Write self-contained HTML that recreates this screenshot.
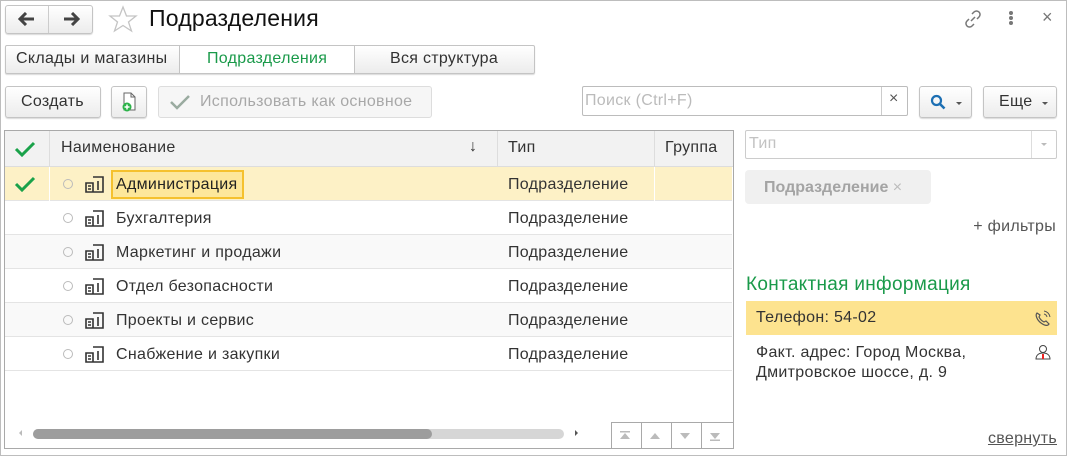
<!DOCTYPE html>
<html><head><meta charset="utf-8"><style>
*{box-sizing:border-box;margin:0;padding:0}
body{width:1067px;height:457px;overflow:hidden;background:#fff;font-family:"Liberation Sans",Arial,sans-serif;font-size:16px;letter-spacing:.3px;color:#333;position:relative}
.a{position:absolute}
.frame{left:0;top:0;width:1067px;height:456px;border:1px solid #bdbdbd}
.btn{position:absolute;border:1px solid #c4c4c4;border-radius:3px;background:linear-gradient(#fff,#ececec);box-shadow:0 1px 1px rgba(0,0,0,.15)}
.row{position:absolute;left:5px;width:727px;height:34px;border-bottom:1px solid #e4e4e4}
.dot{position:absolute;left:58px;top:12px;width:10px;height:10px;border:1px solid #bbb;border-radius:50%}
.ico{position:absolute;left:80px;top:8px}
.t{position:absolute;top:9px}
</style></head><body>
<div class="a frame"></div>
<div class="btn" style="left:5px;top:5px;width:88px;height:29px"></div>
<div class="a" style="left:48px;top:6px;width:1px;height:27px;background:#ccc"></div>
<svg class="a" style="left:18px;top:12px" width="18" height="14"><path d="M2 7H16M8 1L2 7L8 13" stroke="#444" stroke-width="3" fill="none"/></svg>
<svg class="a" style="left:62px;top:12px" width="18" height="14"><path d="M2 7H16M10 1L16 7L10 13" stroke="#444" stroke-width="3" fill="none"/></svg>
<svg class="a" style="left:108px;top:5px" width="30" height="28"><path d="M15 2L18.5 11H28L20.5 17L23.5 26L15 20.5L6.5 26L9.5 17L2 11H11.5Z" fill="none" stroke="#c4c4c4" stroke-width="1.3"/></svg>
<div class="a" style="left:149px;top:5px;font-size:23px;color:#111;letter-spacing:.2px">Подразделения</div>
<svg class="a" style="left:963px;top:9px" width="20" height="20"><path d="M8 12L12 8M9 5l2-2a3.5 3.5 0 015 5l-2 2M11 15l-2 2a3.5 3.5 0 01-5-5l2-2" stroke="#777" stroke-width="1.5" fill="none"/></svg>
<div class="a" style="left:1009px;top:11px;width:4px;height:4px;background:#777;border-radius:2px;box-shadow:0 5px 0 #777,0 10px 0 #777"></div>
<div class="a" style="left:1042px;top:7px;font-size:18px;color:#777">×</div>
<div class="btn" style="left:5px;top:45px;width:530px;height:29px;border-radius:2px"></div>
<div class="a" style="left:179px;top:45px;width:176px;height:29px;background:#fff;border:1px solid #c4c4c4"></div>
<div class="a" style="left:16px;top:50px;color:#333">Склады и магазины</div>
<div class="a" style="left:207px;top:50px;color:#1a9a4a">Подразделения</div>
<div class="a" style="left:390px;top:50px;color:#333">Вся структура</div>
<div class="btn" style="left:5px;top:86px;width:96px;height:32px"></div>
<div class="a" style="left:21px;top:93px;color:#333">Создать</div>
<div class="btn" style="left:111px;top:86px;width:36px;height:32px"></div>
<svg class="a" style="left:119px;top:91px" width="20" height="22"><path d="M5 2H12L16 6V19H5Z" fill="#fff" stroke="#666"/><path d="M12 2V6H16" fill="none" stroke="#666"/><circle cx="8" cy="16" r="4.5" fill="#2db34a"/><path d="M8 13.5v5M5.5 16h5" stroke="#fff" stroke-width="1.5"/></svg>
<div class="a" style="left:158px;top:86px;width:274px;height:32px;border:1px solid #ddd;border-radius:3px;background:#f6f6f6"></div>
<svg class="a" style="left:169px;top:94px" width="22" height="16"><path d="M2 8L8 14L20 2" stroke="#9aaba0" stroke-width="2.5" fill="none"/></svg>
<div class="a" style="left:200px;top:93px;color:#a8a8a8">Использовать как основное</div>
<div class="a" style="left:582px;top:86px;width:326px;height:30px;border:1px solid #bcbcbc;border-radius:2px"></div>
<div class="a" style="left:881px;top:87px;width:1px;height:28px;background:#ccc"></div>
<div class="a" style="left:585px;top:92px;color:#bbb">Поиск (Ctrl+F)</div>
<div class="a" style="left:889px;top:90px;color:#555;font-size:16px">×</div>
<div class="btn" style="left:919px;top:86px;width:53px;height:32px"></div>
<svg class="a" style="left:930px;top:94px" width="16" height="16"><circle cx="6.5" cy="6.5" r="4.5" stroke="#1c6fb3" stroke-width="2.2" fill="none"/><path d="M10 10L14.5 14.5" stroke="#1c6fb3" stroke-width="2.6"/></svg>
<div class="a" style="left:956px;top:102px;border:3px solid transparent;border-top:3px solid #555"></div>
<div class="btn" style="left:983px;top:86px;width:74px;height:32px"></div>
<div class="a" style="left:999px;top:93px;color:#333">Еще</div>
<div class="a" style="left:1042px;top:102px;border:3px solid transparent;border-top:3px solid #555"></div>
<div class="a" style="left:4px;top:130px;width:730px;height:319px;border:1px solid #a9a9a9"></div>
<div class="a" style="left:5px;top:131px;width:728px;height:36px;background:#f2f2f2;border-bottom:1px solid #ddd"></div>
<div class="a" style="left:49px;top:131px;width:1px;height:36px;background:#ddd"></div>
<div class="a" style="left:497px;top:131px;width:1px;height:36px;background:#ddd"></div>
<div class="a" style="left:654px;top:131px;width:1px;height:36px;background:#ddd"></div>
<svg class="a" style="left:14px;top:141px" width="22" height="16"><path d="M2 8L8 14L20 2" stroke="#1aa24a" stroke-width="3" fill="none"/></svg>
<div class="a" style="left:61px;top:139px;color:#333">Наименование</div>
<div class="a" style="left:469px;top:138px;color:#333">↓</div>
<div class="a" style="left:508px;top:139px;color:#333">Тип</div>
<div class="a" style="left:665px;top:139px;color:#333">Группа</div>
<div class="row" style="top:167px;background:#fdf1c6"><svg class="a" style="left:9px;top:9px" width="22" height="16"><path d="M2 8L8 14L20 2" stroke="#1aa24a" stroke-width="3" fill="none"/></svg><div class="a" style="left:44px;top:0;width:1px;height:34px;background:#fff"></div><div class="a" style="left:649px;top:0;width:1px;height:34px;background:#fff"></div><div class="a" style="left:106px;top:3px;width:133px;height:29px;border:2px solid #f5c12e;background:#fde79b"></div></div>
<div class="row" style="top:201px"></div>
<div class="row" style="top:235px;background:#f9f9f9"></div>
<div class="row" style="top:269px"></div>
<div class="row" style="top:303px;background:#f9f9f9"></div>
<div class="row" style="top:337px"></div>
<div class="a" style="left:16px;top:430px;border:3px solid transparent;border-right:3px solid #bbb"></div>
<div class="a" style="left:33px;top:429px;width:531px;height:10px;background:#d6d6d6;border-radius:5px"></div>
<div class="a" style="left:33px;top:429px;width:399px;height:10px;background:#9d9d9d;border-radius:5px"></div>
<div class="a" style="left:575px;top:430px;border:3px solid transparent;border-left:3px solid #555"></div>
<div class="a" style="left:611px;top:422px;width:122px;height:26px;border-top:1px solid #a9a9a9;border-left:1px solid #a9a9a9"></div>
<div class="a" style="left:641px;top:423px;width:1px;height:25px;background:#a9a9a9"></div>
<div class="a" style="left:671px;top:423px;width:1px;height:25px;background:#a9a9a9"></div>
<div class="a" style="left:701px;top:423px;width:1px;height:25px;background:#a9a9a9"></div>
<svg class="a" style="left:619px;top:430px" width="110" height="12" fill="#bbb"><path d="M1 1h10v1.5H1zM6 3L11 9H1z"/><path d="M36 3L41 9H31z"/><path d="M61 3H71L66 9z"/><path d="M91 3H101L96 9zM91 9.5h10V11H91z"/></svg>
<div class="a" style="left:745px;top:130px;width:312px;height:29px;border:1px solid #ccc;border-radius:2px"></div>
<div class="a" style="left:1031px;top:131px;width:1px;height:27px;background:#ddd"></div>
<div class="a" style="left:749px;top:135px;color:#c2c2c2">Тип</div>
<div class="a" style="left:1041px;top:143px;border:3px solid transparent;border-top:3px solid #bbb"></div>
<div class="a" style="left:745px;top:170px;width:186px;height:34px;background:#f0f0f0;border-radius:4px"></div>
<div class="a" style="left:764px;top:179px;color:#a4a4a4;font-weight:bold;letter-spacing:0">Подразделение <span style="font-weight:normal;color:#bbb">×</span></div>
<div class="a" style="right:11px;top:218px;color:#555">+ фильтры</div>
<div class="a" style="left:746px;top:274px;font-size:19px;color:#1a9a4a">Контактная информация</div>
<div class="a" style="left:746px;top:301px;width:311px;height:34px;background:#fde38f"></div>
<div class="a" style="left:756px;top:309px;color:#333">Телефон: 54-02</div>
<svg class="a" style="left:1034px;top:310px" width="17" height="17"><path d="M3 3c-2 2 0 7 4 10s7 3 8 1l-3-3-2 1c-2-1-4-3-5-5l1-2z" fill="none" stroke="#555" stroke-width="1.2"/><path d="M10 4a4 4 0 013 3M10 1a7 7 0 016 6" stroke="#555" fill="none"/></svg>
<div class="a" style="left:756px;top:343px;color:#333;line-height:20px">Факт. адрес: Город Москва,<br>Дмитровское шоссе, д. 9</div>
<svg class="a" style="left:1035px;top:344px" width="16" height="16"><circle cx="8" cy="5" r="3.5" fill="none" stroke="#444"/><path d="M1 15c0-4 3-6 7-6s7 2 7 6z" fill="none" stroke="#444"/><path d="M8 10v5" stroke="#e22" stroke-width="2"/></svg>
<div class="a" style="right:10px;top:430px;color:#555;text-decoration:underline">свернуть</div>
<div class="a" style="left:5px;top:167px;width:728px">
 <div style="position:relative;height:34px"><div class="dot"></div><svg class="ico" width="20" height="18"><path d="M1 8h7v9H1zM8 2h10v15H8M3 11h3M3 14h3M13 6v9" fill="none" stroke="#333" stroke-width="1.6"/></svg><span class="t" style="left:111px;color:#222">Администрация</span><span class="t" style="left:503px">Подразделение</span></div>
 <div style="position:relative;height:34px"><div class="dot"></div><svg class="ico" width="20" height="18"><path d="M1 8h7v9H1zM8 2h10v15H8M3 11h3M3 14h3M13 6v9" fill="none" stroke="#333" stroke-width="1.6"/></svg><span class="t" style="left:111px">Бухгалтерия</span><span class="t" style="left:503px">Подразделение</span></div>
 <div style="position:relative;height:34px"><div class="dot"></div><svg class="ico" width="20" height="18"><path d="M1 8h7v9H1zM8 2h10v15H8M3 11h3M3 14h3M13 6v9" fill="none" stroke="#333" stroke-width="1.6"/></svg><span class="t" style="left:111px">Маркетинг и продажи</span><span class="t" style="left:503px">Подразделение</span></div>
 <div style="position:relative;height:34px"><div class="dot"></div><svg class="ico" width="20" height="18"><path d="M1 8h7v9H1zM8 2h10v15H8M3 11h3M3 14h3M13 6v9" fill="none" stroke="#333" stroke-width="1.6"/></svg><span class="t" style="left:111px">Отдел безопасности</span><span class="t" style="left:503px">Подразделение</span></div>
 <div style="position:relative;height:34px"><div class="dot"></div><svg class="ico" width="20" height="18"><path d="M1 8h7v9H1zM8 2h10v15H8M3 11h3M3 14h3M13 6v9" fill="none" stroke="#333" stroke-width="1.6"/></svg><span class="t" style="left:111px">Проекты и сервис</span><span class="t" style="left:503px">Подразделение</span></div>
 <div style="position:relative;height:34px"><div class="dot"></div><svg class="ico" width="20" height="18"><path d="M1 8h7v9H1zM8 2h10v15H8M3 11h3M3 14h3M13 6v9" fill="none" stroke="#333" stroke-width="1.6"/></svg><span class="t" style="left:111px">Снабжение и закупки</span><span class="t" style="left:503px">Подразделение</span></div>
</div>
</body></html>
